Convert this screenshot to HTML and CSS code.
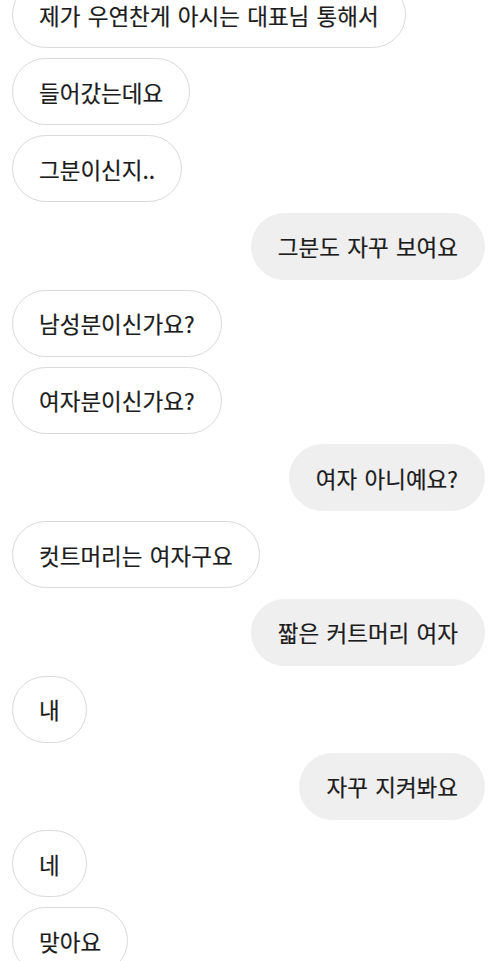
FILE: index.html
```html
<!DOCTYPE html>
<html lang="ko">
  <head>
    <meta charset="UTF-8" />
    <meta name="viewport" content="width=device-width, initial-scale=1.0" />
    <title>대화</title>
    <link rel="stylesheet" href="styles.css">
  </head>
  <body>
    <div class="chat">
      <div class="msg them">제가 우연찬게 아시는 대표님 통해서</div>
      <div class="msg them">들어갔는데요</div>
      <div class="msg them">그분이신지..</div>
      <div class="msg me">그분도 자꾸 보여요</div>
      <div class="msg them">남성분이신가요?</div>
      <div class="msg them">여자분이신가요?</div>
      <div class="msg me">여자 아니예요?</div>
      <div class="msg them">컷트머리는 여자구요</div>
      <div class="msg me">짧은 커트머리 여자</div>
      <div class="msg them">내</div>
      <div class="msg me">자꾸 지켜봐요</div>
      <div class="msg them">네</div>
      <div class="msg them">맞아요</div>
    </div>
  </body>
</html>
```

FILE: styles.css
```css
* {
  box-sizing: border-box;
  --text-color: #1c1c1c;
  --border-color: #dadada;
  --mine-color: #efefef;
}

body {
  margin: 0;
  background: #fff;
  overflow: hidden;
  font-family: "Noto Sans CJK KR", "Noto Sans", sans-serif;
}

.chat {
  display: flex;
  flex-direction: column;
  gap: 10.2px;
  margin-top: -19px;
  padding: 0 19px 0 12px;

  .msg {
    height: 67px;
    display: flex;
    align-items: center;
    font-size: 22.5px;
    line-height: 30px;
    padding: 0 26px;
    border-radius: 40px;
    color: var(--text-color);
    word-spacing: 1px;
    -webkit-text-stroke: 0.2px var(--text-color);
  }

  .them {
    align-self: flex-start;
    border: 1.5px solid var(--border-color);
    background: #fff;
  }

  .me {
    align-self: flex-end;
    border: 1.5px solid var(--mine-color);
    background: var(--mine-color);
  }
}
```
